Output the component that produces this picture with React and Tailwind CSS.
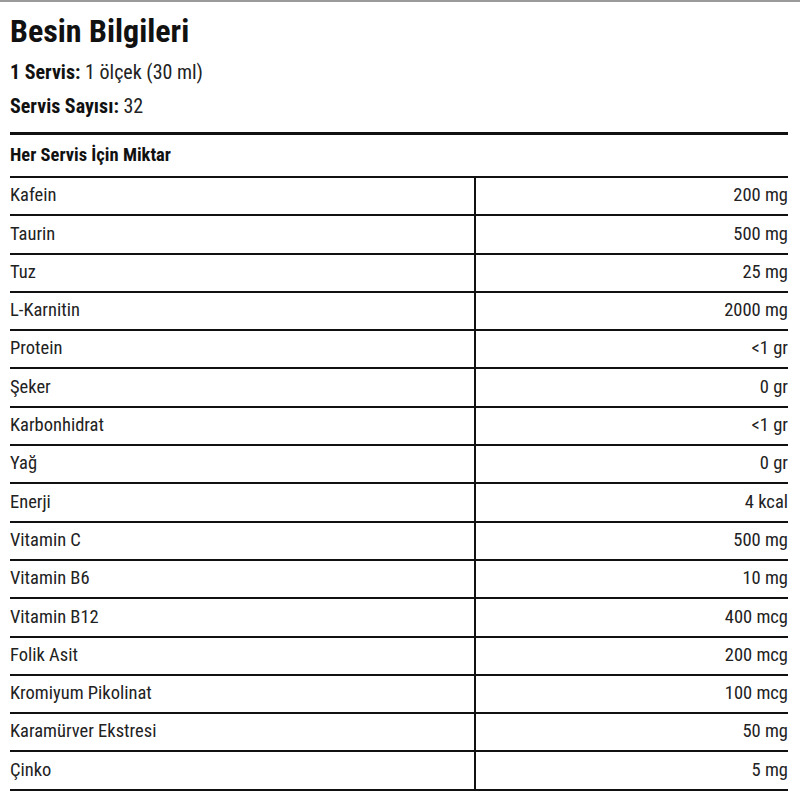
import React from "react";

const rows = [
  ["Kafein", "200 mg"],
  ["Taurin", "500 mg"],
  ["Tuz", "25 mg"],
  ["L-Karnitin", "2000 mg"],
  ["Protein", "<1 gr"],
  ["Şeker", "0 gr"],
  ["Karbonhidrat", "<1 gr"],
  ["Yağ", "0 gr"],
  ["Enerji", "4 kcal"],
  ["Vitamin C", "500 mg"],
  ["Vitamin B6", "10 mg"],
  ["Vitamin B12", "400 mcg"],
  ["Folik Asit", "200 mcg"],
  ["Kromiyum Pikolinat", "100 mcg"],
  ["Karamürver Ekstresi", "50 mg"],
  ["Çinko", "5 mg"],
];

const App = () => {
  return (
    <div
      className="w-[800px] h-[800px] bg-white border-t-2 border-[#9a9a9a] text-[#222] overflow-hidden"
      style={{ fontFamily: '"Roboto Condensed", "Liberation Sans Narrow", Roboto, sans-serif' }}
    >
      <div className="pl-[10px] pr-[12px] pt-[10px]">
        <h1 className="text-[32px] leading-[38px] font-bold text-[#111]">Besin Bilgileri</h1>

        {/* serving info */}
        <p className="text-[20px] leading-[24px] mt-[10px]">
          <span className="font-bold text-[#111]">1 Servis:</span> 1 ölçek (30 ml)
        </p>
        <p className="text-[20px] leading-[24px] mt-[10px]">
          <span className="font-bold text-[#111]">Servis Sayısı:</span> 32
        </p>

        <div className="mt-[14px] border-t-[3px] border-[#111]">
          <div className="h-[43px] flex items-center text-[18.5px] font-bold text-[#111] border-b-2 border-[#111]">
            Her Servis İçin Miktar
          </div>

          {rows.map(([name, amount]) => (
            <div key={name} className="grid grid-cols-[466px_1fr] h-[38.3px] border-b-2 border-[#111] text-[18.5px]">
              <div className="flex items-center border-r-2 border-[#111]">{name}</div>
              <div className="flex items-center justify-end">{amount}</div>
            </div>
          ))}
        </div>
      </div>
    </div>
  );
};

export default App;
